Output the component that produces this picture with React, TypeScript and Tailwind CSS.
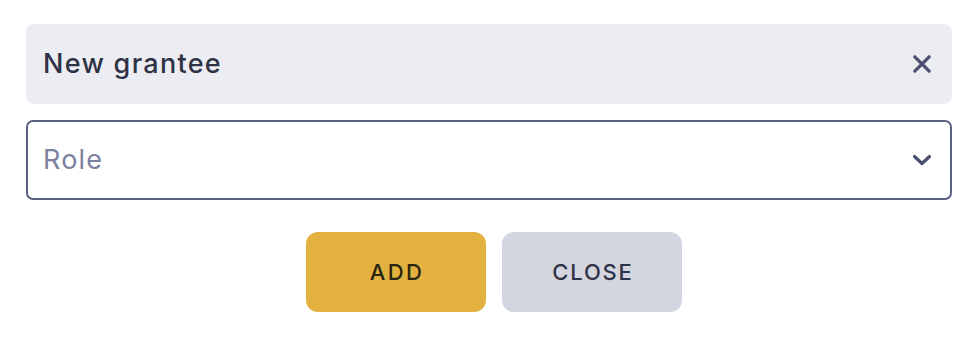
import React from "react";

export default function App() {
  return (
    <div className="w-[978px] h-[360px] bg-white pt-[24px] px-[26px]" style={{ fontFamily: "Inter, 'Noto Sans', sans-serif" }}>
      <div className="flex h-[80px] items-center justify-between rounded-[8px] bg-[#ecedf2] pl-[17px] pr-[20px]">
        <span className="text-[27px] font-medium text-[#2e3244] tracking-[1.3px]">New grantee</span>
        <svg width="20" height="20" viewBox="0 0 20 20" className="text-[#4a5070]">
          <path d="M2.8 2.8L17.2 17.2M17.2 2.8L2.8 17.2" stroke="currentColor" strokeWidth="3.2" strokeLinecap="round" />
        </svg>
      </div>
      <div className="mt-[16px] flex h-[80px] items-center justify-between rounded-[7px] border-2 border-[#5a6182] pl-[15px] pr-[18px]">
        <span className="text-[27px] text-[#7c82a0] tracking-[1.2px]">Role</span>
        <svg width="20" height="14" viewBox="0 0 20 14" className="text-[#4a5070]">
          <path d="M2.5 3.5L10 10.5L17.5 3.5" stroke="currentColor" strokeWidth="3.2" strokeLinecap="round" strokeLinejoin="round" fill="none" />
        </svg>
      </div>
      <div className="mt-[32px] flex justify-center gap-[16px] pl-[10px]">
        <button className="h-[80px] w-[180px] rounded-[12px] bg-[#e3b13f] pl-[2px] text-[22px] font-medium text-[#2b2510] tracking-[2.4px]">ADD</button>
        <button className="h-[80px] w-[180px] rounded-[12px] bg-[#d3d5e0] pl-[2px] text-[22px] font-medium text-[#2f3345] tracking-[1.8px]">CLOSE</button>
      </div>
    </div>
  );
}
